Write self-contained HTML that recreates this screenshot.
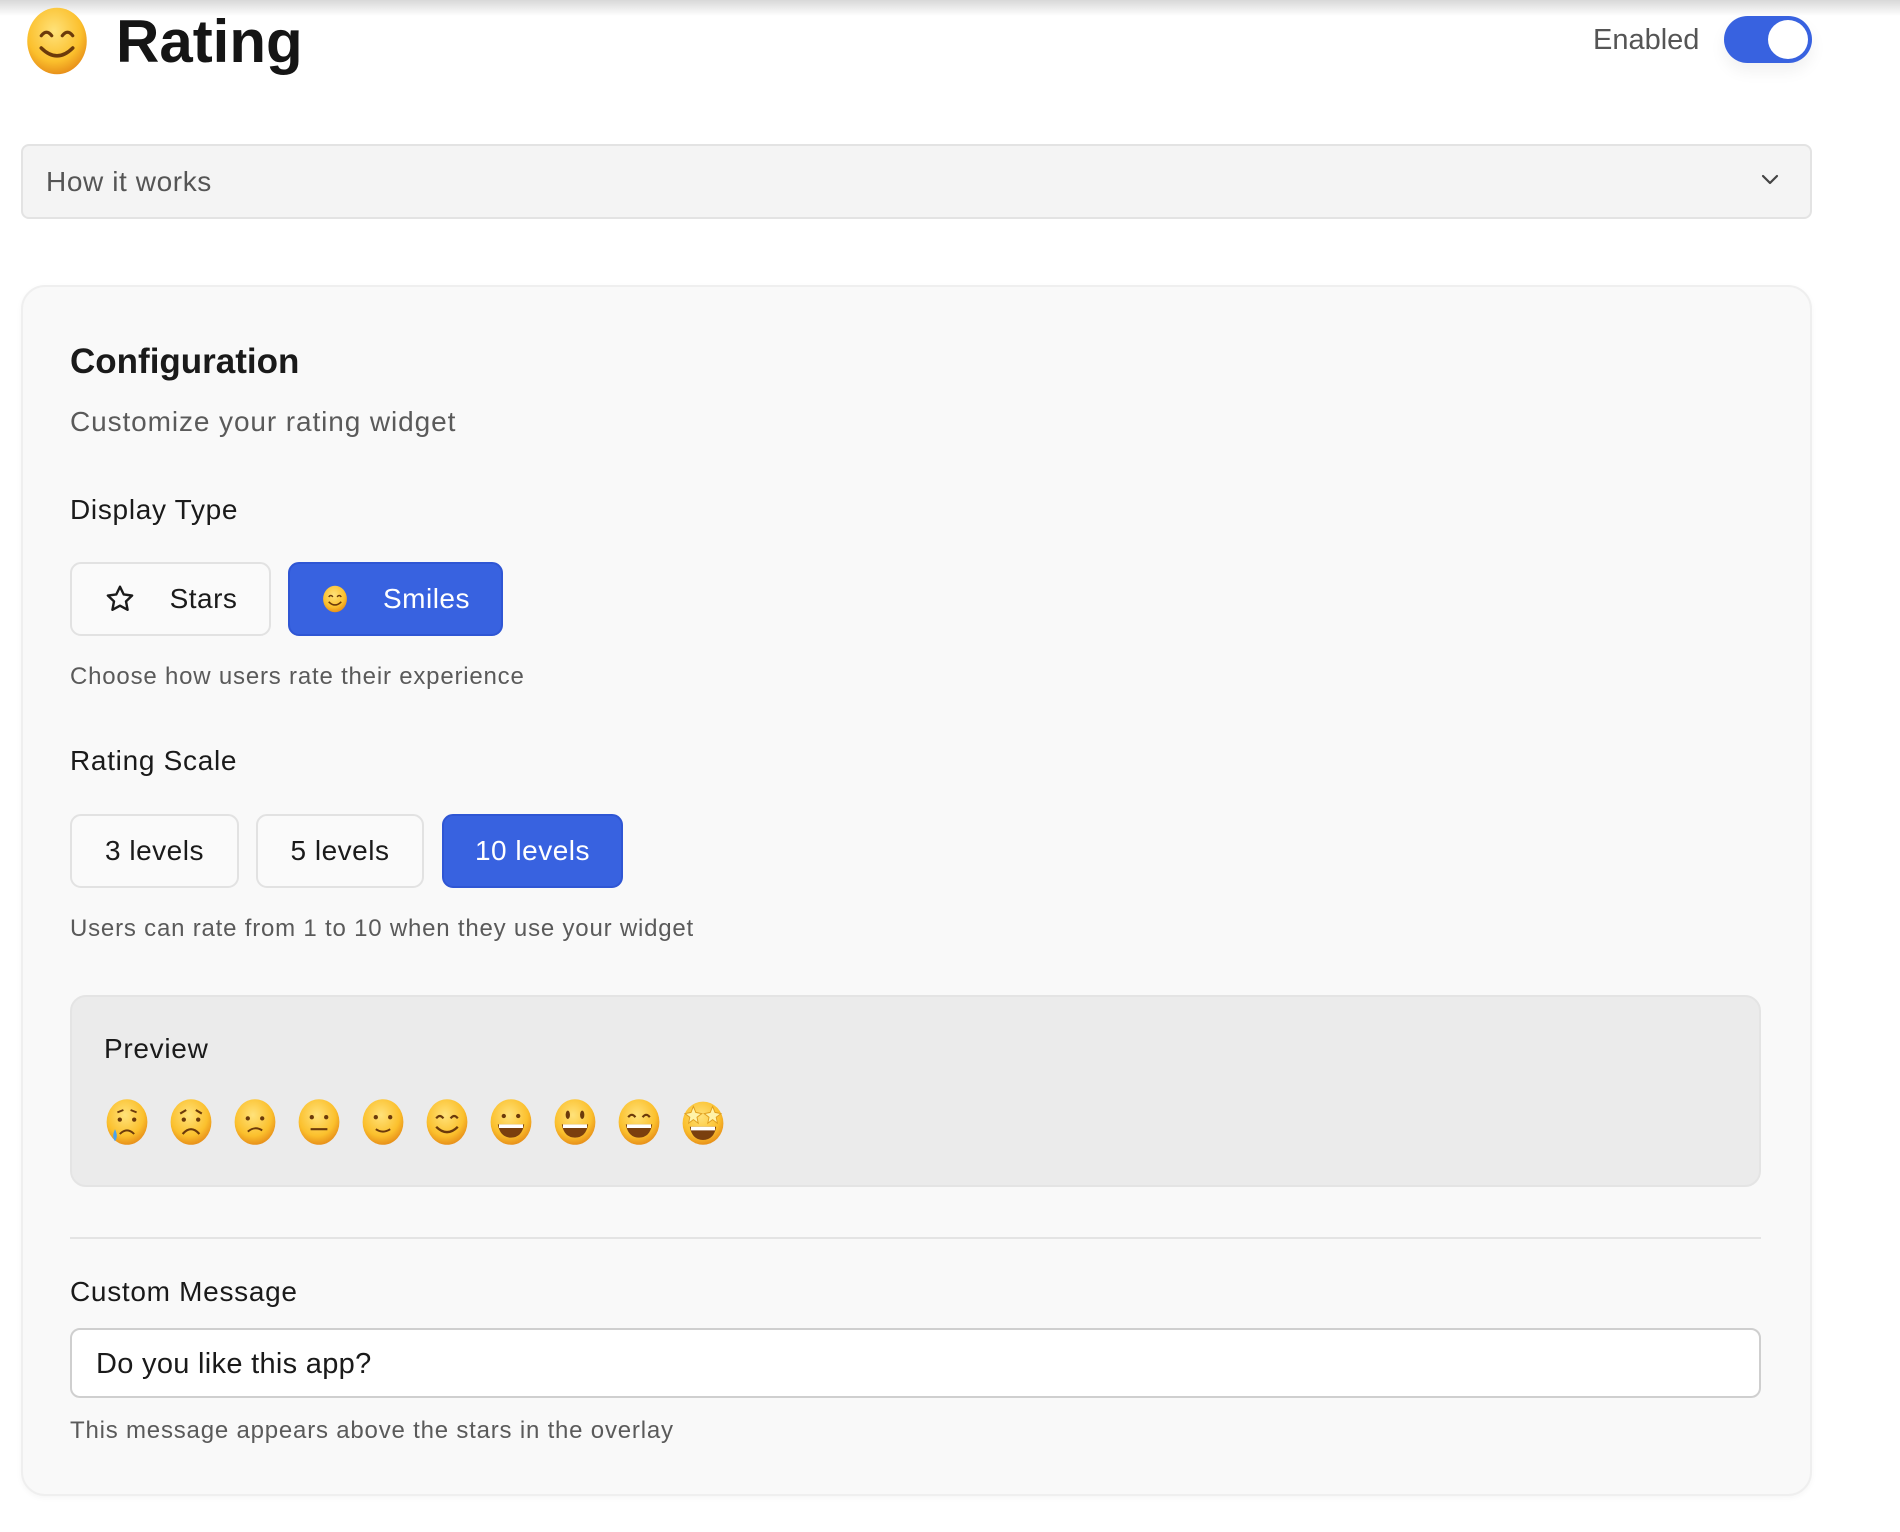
<!DOCTYPE html>
<html><head><meta charset="utf-8"><style>
*{box-sizing:border-box;margin:0;padding:0}
body{width:1900px;height:1532px;background:#fff;font-family:"Liberation Sans",sans-serif;color:#1a1a1a;position:relative;overflow:hidden}
.abs{position:absolute}
.topsh{left:0;top:0;width:1900px;height:16px;background:linear-gradient(#d8d8d8,rgba(255,255,255,0))}
.btn{position:absolute;border:2px solid #e2e2e2;border-radius:11px;background:#fafafa;display:flex;align-items:center;justify-content:center;font-size:28px;color:#1a1a1a;letter-spacing:0.5px}
.btn.on{background:#3862e0;border-color:#2f56d4;color:#fff}
.lbl{position:absolute;left:70px;font-size:28px;color:#1a1a1a;line-height:1;letter-spacing:0.7px}
.hint{position:absolute;left:70px;font-size:24px;color:#5a5a5a;line-height:1;letter-spacing:0.8px}
.faces{position:absolute;left:103px;top:1098px;display:flex;gap:16px}
.faces svg{width:48px;height:48px}
</style></head><body>
<div class="abs topsh"></div>
<svg class="abs" style="left:22px;top:6px" width="70" height="70" viewBox="0 0 40 40">
<defs><radialGradient id="g" cx="45%" cy="35%" r="65%"><stop offset="0" stop-color="#ffe27a"/><stop offset="0.7" stop-color="#fbc02d"/><stop offset="1" stop-color="#e8911a"/></radialGradient></defs>
<ellipse cx="20" cy="20" rx="17" ry="19" fill="url(#g)"/>
<path d="M11 17q3-4 6 0M23 17q3-4 6 0" stroke="#6b3a0b" stroke-width="1.8" fill="none" stroke-linecap="round"/>
<path d="M11 24q9 9 18 0" stroke="#6b3a0b" stroke-width="2" fill="none" stroke-linecap="round"/>
</svg>
<div class="abs" style="left:116px;top:6px;font-size:60px;font-weight:bold;line-height:72px;color:#151515">Rating</div>
<div class="abs" style="left:1593px;top:24px;font-size:29px;color:#555;line-height:32px">Enabled</div>
<div class="abs" style="left:1724px;top:16px;width:88px;height:47px;border-radius:24px;background:#3862e0;box-shadow:0 8px 16px rgba(0,0,0,0.06)"><div class="abs" style="left:44px;top:4px;width:40px;height:39px;border-radius:50%;background:#fff"></div></div>

<div class="abs" style="left:21px;top:144px;width:1791px;height:75px;background:#f4f4f4;border:2px solid #e3e3e3;border-radius:8px"></div>
<div class="abs" style="left:46px;top:166px;font-size:28px;color:#555;line-height:32px;letter-spacing:0.6px">How it works</div>
<svg class="abs" style="left:1760px;top:173px" width="20" height="14" viewBox="0 0 20 14"><path d="M3 3l7 7 7-7" stroke="#444" stroke-width="2.2" fill="none" stroke-linecap="round" stroke-linejoin="round"/></svg>

<div class="abs" style="left:21px;top:285px;width:1791px;height:1211px;background:#f9f9f9;border:2px solid #efefef;border-radius:24px;box-shadow:0 2px 6px rgba(0,0,0,0.04)"></div>
<div class="abs" style="left:70px;top:343px;font-size:35px;font-weight:bold;line-height:38px;color:#1a1a1a">Configuration</div>
<div class="hint" style="top:408px;font-size:28px;letter-spacing:0.9px">Customize your rating widget</div>
<div class="lbl" style="top:496px">Display Type</div>
<div class="btn" style="left:70px;top:562px;width:201px;height:74px"><svg width="32" height="32" viewBox="0 0 24 24" style="margin-right:34px"><path d="M12 2.8l2.8 5.8 6.3.8-4.6 4.4 1.2 6.3L12 17l-5.7 3.1 1.2-6.3-4.6-4.4 6.3-.8z" fill="none" stroke="#1a1a1a" stroke-width="1.8" stroke-linejoin="round"/></svg>Stars</div>
<div class="btn on" style="left:288px;top:562px;width:215px;height:74px"><svg width="28" height="28" viewBox="0 0 40 40" style="margin-right:34px"><ellipse cx="20" cy="20" rx="17" ry="19" fill="url(#g)"/><path d="M11 17q3-4 6 0M23 17q3-4 6 0" stroke="#6b3a0b" stroke-width="2" fill="none"/><path d="M11 24q9 9 18 0" stroke="#6b3a0b" stroke-width="2.2" fill="none"/></svg>Smiles</div>
<div class="hint" style="top:665px">Choose how users rate their experience</div>
<div class="lbl" style="top:747px">Rating Scale</div>
<div class="btn" style="left:70px;top:814px;width:169px;height:74px">3 levels</div>
<div class="btn" style="left:256px;top:814px;width:168px;height:74px">5 levels</div>
<div class="btn on" style="left:442px;top:814px;width:181px;height:74px">10 levels</div>
<div class="hint" style="top:917px">Users can rate from 1 to 10 when they use your widget</div>

<div class="abs" style="left:70px;top:995px;width:1691px;height:192px;background:#ebebeb;border:2px solid #e4e4e4;border-radius:16px"></div>
<div class="lbl" style="left:104px;top:1035px">Preview</div>
<div class="faces">
<svg viewBox="0 0 40 40"><ellipse cx="20" cy="20" rx="17" ry="19" fill="url(#g)"/><circle cx="14" cy="18" r="1.8" fill="#6b3a0b"/><circle cx="26" cy="18" r="1.8" fill="#6b3a0b"/><path d="M12 12l5-2M28 12l-5-2M14 30q6-6 12 0" stroke="#6b3a0b" stroke-width="1.6" fill="none"/><path d="M10 26q-3 6 0 10q3-4 0-10z" fill="#4aa3f0"/></svg>
<svg viewBox="0 0 40 40"><ellipse cx="20" cy="20" rx="17" ry="19" fill="url(#g)"/><circle cx="14" cy="18" r="1.8" fill="#6b3a0b"/><circle cx="26" cy="18" r="1.8" fill="#6b3a0b"/><path d="M11 13l5-3M29 13l-5-3M13 30q7-8 14 0" stroke="#6b3a0b" stroke-width="1.8" fill="none"/></svg>
<svg viewBox="0 0 40 40"><ellipse cx="20" cy="20" rx="17" ry="19" fill="url(#g)"/><circle cx="14" cy="17" r="1.8" fill="#6b3a0b"/><circle cx="26" cy="17" r="1.8" fill="#6b3a0b"/><path d="M14 28q6-5 12-1" stroke="#6b3a0b" stroke-width="1.6" fill="none"/></svg>
<svg viewBox="0 0 40 40"><ellipse cx="20" cy="20" rx="17" ry="19" fill="url(#g)"/><circle cx="14" cy="16" r="1.8" fill="#6b3a0b"/><circle cx="26" cy="16" r="1.8" fill="#6b3a0b"/><path d="M13 26h14" stroke="#6b3a0b" stroke-width="1.8"/></svg>
<svg viewBox="0 0 40 40"><ellipse cx="20" cy="20" rx="17" ry="19" fill="url(#g)"/><circle cx="14" cy="16" r="1.8" fill="#6b3a0b"/><circle cx="26" cy="16" r="1.8" fill="#6b3a0b"/><path d="M14 26q6 4 12 0" stroke="#6b3a0b" stroke-width="1.6" fill="none"/></svg>
<svg viewBox="0 0 40 40"><ellipse cx="20" cy="20" rx="17" ry="19" fill="url(#g)"/><path d="M11 17q3-4 6 0M23 17q3-4 6 0" stroke="#6b3a0b" stroke-width="1.8" fill="none"/><path d="M11 24q9 9 18 0" stroke="#6b3a0b" stroke-width="2" fill="none"/></svg>
<svg viewBox="0 0 40 40"><ellipse cx="20" cy="20" rx="17" ry="19" fill="url(#g)"/><circle cx="14" cy="15" r="1.8" fill="#6b3a0b"/><circle cx="26" cy="15" r="1.8" fill="#6b3a0b"/><path d="M9 22h22q-2 11-11 11t-11-11z" fill="#7a3f0e"/><path d="M10 22h20v3h-20z" fill="#fff"/></svg>
<svg viewBox="0 0 40 40"><ellipse cx="20" cy="20" rx="17" ry="19" fill="url(#g)"/><ellipse cx="14" cy="14" rx="1.8" ry="3.5" fill="#6b3a0b"/><ellipse cx="26" cy="14" rx="1.8" ry="3.5" fill="#6b3a0b"/><path d="M9 22h22q-2 11-11 11t-11-11z" fill="#7a3f0e"/><path d="M10 22h20v3h-20z" fill="#fff"/></svg>
<svg viewBox="0 0 40 40"><ellipse cx="20" cy="20" rx="17" ry="19" fill="url(#g)"/><path d="M11 16q3-4 6 0M23 16q3-4 6 0" stroke="#6b3a0b" stroke-width="1.8" fill="none"/><path d="M9 22h22q-2 11-11 11t-11-11z" fill="#7a3f0e"/><path d="M10 22h20v3h-20z" fill="#fff"/></svg>
<svg viewBox="0 0 40 40"><ellipse cx="20" cy="21" rx="17" ry="18" fill="url(#g)"/><path d="M12 7l2 5 5 1-4 3 1 5-4-3-4 3 1-5-4-3 5-1zM28 7l2 5 5 1-4 3 1 5-4-3-4 3 1-5-4-3 5-1z" fill="#fff3a8" stroke="#e0a020" stroke-width="0.8"/><path d="M9 24h22q-2 11-11 11t-11-11z" fill="#7a3f0e"/><path d="M10 24h20v3h-20z" fill="#fff"/></svg>
</div>

<div class="abs" style="left:70px;top:1237px;width:1691px;height:2px;background:#e4e4e4"></div>
<div class="lbl" style="top:1278px">Custom Message</div>
<div class="abs" style="left:70px;top:1328px;width:1691px;height:70px;background:#fff;border:2px solid #cfcfcf;border-radius:10px"></div>
<div class="abs" style="left:96px;top:1348px;font-size:29px;line-height:32px;color:#1a1a1a;letter-spacing:0.3px">Do you like this app?</div>
<div class="hint" style="top:1419px">This message appears above the stars in the overlay</div>
</body></html>
